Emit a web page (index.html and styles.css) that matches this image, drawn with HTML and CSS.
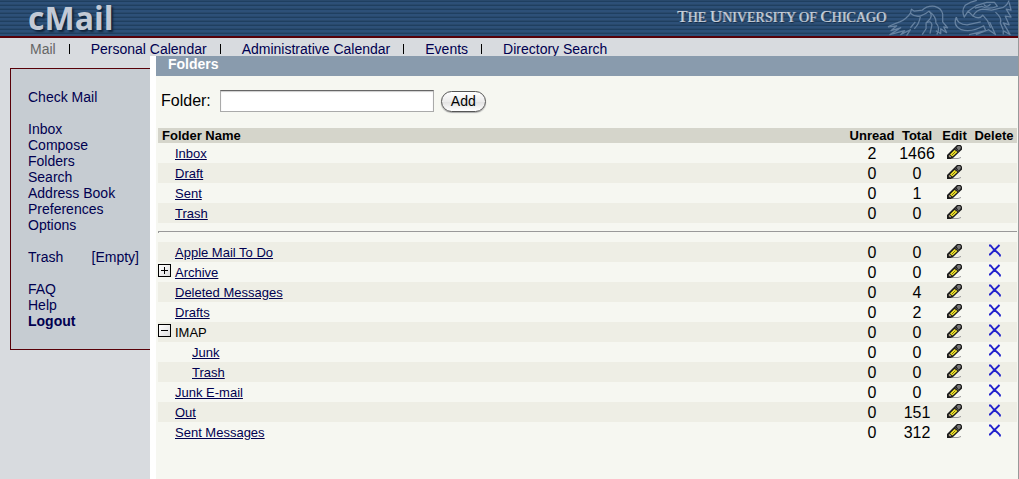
FILE: index.html
```html
<!DOCTYPE html>
<html lang="en">
<head>
<meta charset="utf-8">
<title>cMail - Folders</title>
<link rel="stylesheet" href="styles.css">
</head>
<body>
<svg class="defs" width="0" height="0" aria-hidden="true">
  <symbol id="pencil" viewBox="0 0 15 15">
    <path d="M5 13.500H11L14 12.500" fill="none" stroke="#999" stroke-width="1"/>
    <path d="M0 14V10L8 2L10 0H13.500L15 1.500V4.500L6 13L4 14Z" fill="#1c1c1c"/>
    <path d="M9.500 2.500L11 1H13L14 2.500L13 4.500L11.500 5.500Z" fill="#777"/>
    <path d="M8 3.500L12 6.500" stroke="#555" stroke-width="1"/>
    <path d="M3 9.500L7.500 5L10.500 7L5.500 11.500Z" fill="#f4e72a"/>
    <path d="M5 10L8.500 6.500" stroke="#7a7210" stroke-width="1"/>
    <path d="M1.500 11L2.500 10L4.500 12L3 12.500Z" fill="#b9a98c"/>
  </symbol>
  <symbol id="cross" viewBox="0 0 13 13">
    <path d="M1 1.500H2.500L5.500 5L10 9L12 11V12.500M11.500 1L6.500 6L2 10.500H1" fill="none" stroke="#2222cc" stroke-width="1.800"/>
  </symbol>
</svg>
<header class="banner">
  <div class="logo">cMail</div>
  <div class="school">
    <span class="school-name"><span class="cap">T</span>HE <span class="cap">U</span>NIVERSITY OF <span class="cap">C</span>HICAGO</span>
    <svg class="phoenix" viewBox="0 0 130 36" aria-hidden="true">
      <g fill="none" stroke="#6682a1" stroke-width="1.300" stroke-linejoin="round">
        <path d="M1 27Q7 24 13 22Q20 19 24 13L25 9L28 11L36 10Q41 5 49 6Q56 8 57 14V22L62 28L58 27L61 33L55 29V34L50 31"/>
        <path d="M1 27L10 26L4 31L14 28L3 35L18 31L14 35L24 30L20 36M24 13Q28 17 34 16Q40 14 43 11Q47 15 44 19L40 23V29L36 35"/>
        <path d="M43 11Q51 17 50 23Q55 28 51 35M40 23Q45 20 46 25L44 34M29 22L24 28M34 17Q33 24 28 29"/>
        <path d="M125 0Q122 7 116 8L107 10L98 9Q91 10 88 16L83 11L79 17Q76 10 80 5Q86 1 92 0"/>
        <path d="M83 11L92 5L102 2H110L113 6Q104 10 97 6L90 8M99 4Q102 8 106 4M88 16Q95 20 98 15L103 21L106 28"/>
        <path d="M71 17Q72 25 82 25L96 22M71 17Q67 26 76 30Q87 33 99 26L101 31L84 35M91 35L104 30L111 35L105 22"/>
        <path d="M125 2L127 10L122 9L127 17L121 16L125 25L119 23L126 35L119 31V35M111 12Q118 18 116 23L119 30"/>
      </g>
    </svg>
  </div>
</header>
<nav class="topnav" aria-label="Sections">
  <span class="current">Mail</span><i class="bar"></i>
  <a href="#">Personal Calendar</a><i class="bar"></i>
  <a href="#">Administrative Calendar</a><i class="bar"></i>
  <a href="#">Events</a><i class="bar"></i>
  <a href="#">Directory Search</a>
</nav>
<div class="layout">
  <aside class="side">
    <nav class="menu" aria-label="Mail">
      <div class="group"><a href="#">Check Mail</a></div>
      <div class="group">
        <a href="#">Inbox</a><a href="#">Compose</a><a href="#">Folders</a><a href="#">Search</a><a href="#">Address Book</a><a href="#">Preferences</a><a href="#">Options</a>
      </div>
      <div class="group trash"><a href="#">Trash</a><a href="#">[Empty]</a></div>
      <div class="group"><a href="#">FAQ</a><a href="#">Help</a><a class="logout" href="#">Logout</a></div>
    </nav>
  </aside>
  <main class="panel">
    <h1 class="title">Folders</h1>
    <form class="add">
      <label for="folder">Folder:</label>
      <input id="folder" type="text">
      <button type="button">Add</button>
    </form>
    <table class="folders">
      <colgroup><col><col class="c-unread"><col class="c-total"><col class="c-edit"><col class="c-delete"></colgroup>
      <thead>
        <tr><th class="name">Folder Name</th><th>Unread</th><th>Total</th><th>Edit</th><th>Delete</th></tr>
      </thead>
      <tbody>
        <tr><td class="name"><a href="#">Inbox</a></td><td>2</td><td>1466</td><td><a class="icon" href="#" aria-label="Edit Inbox"><svg class="pencil"><use href="#pencil"/></svg></a></td><td></td></tr>
        <tr class="shade"><td class="name"><a href="#">Draft</a></td><td>0</td><td>0</td><td><a class="icon" href="#" aria-label="Edit Draft"><svg class="pencil"><use href="#pencil"/></svg></a></td><td></td></tr>
        <tr><td class="name"><a href="#">Sent</a></td><td>0</td><td>1</td><td><a class="icon" href="#" aria-label="Edit Sent"><svg class="pencil"><use href="#pencil"/></svg></a></td><td></td></tr>
        <tr class="shade"><td class="name"><a href="#">Trash</a></td><td>0</td><td>0</td><td><a class="icon" href="#" aria-label="Edit Trash"><svg class="pencil"><use href="#pencil"/></svg></a></td><td></td></tr>
      </tbody>
      <tbody>
        <tr class="divider"><td colspan="5"><hr></td></tr>
      </tbody>
      <tbody>
        <tr class="shade"><td class="name"><a href="#">Apple Mail To Do</a></td><td>0</td><td>0</td><td><a class="icon" href="#" aria-label="Edit Apple Mail To Do"><svg class="pencil"><use href="#pencil"/></svg></a></td><td><a class="icon" href="#" aria-label="Delete Apple Mail To Do"><svg class="cross"><use href="#cross"/></svg></a></td></tr>
        <tr><td class="name tree"><div class="node"><button class="toggle plus" type="button" aria-label="Expand Archive"></button><a href="#">Archive</a></div></td><td>0</td><td>0</td><td><a class="icon" href="#" aria-label="Edit Archive"><svg class="pencil"><use href="#pencil"/></svg></a></td><td><a class="icon" href="#" aria-label="Delete Archive"><svg class="cross"><use href="#cross"/></svg></a></td></tr>
        <tr class="shade"><td class="name"><a href="#">Deleted Messages</a></td><td>0</td><td>4</td><td><a class="icon" href="#" aria-label="Edit Deleted Messages"><svg class="pencil"><use href="#pencil"/></svg></a></td><td><a class="icon" href="#" aria-label="Delete Deleted Messages"><svg class="cross"><use href="#cross"/></svg></a></td></tr>
        <tr><td class="name"><a href="#">Drafts</a></td><td>0</td><td>2</td><td><a class="icon" href="#" aria-label="Edit Drafts"><svg class="pencil"><use href="#pencil"/></svg></a></td><td><a class="icon" href="#" aria-label="Delete Drafts"><svg class="cross"><use href="#cross"/></svg></a></td></tr>
        <tr class="shade"><td class="name tree"><div class="node"><button class="toggle" type="button" aria-label="Collapse IMAP"></button><span>IMAP</span></div></td><td>0</td><td>0</td><td><a class="icon" href="#" aria-label="Edit IMAP"><svg class="pencil"><use href="#pencil"/></svg></a></td><td><a class="icon" href="#" aria-label="Delete IMAP"><svg class="cross"><use href="#cross"/></svg></a></td></tr>
        <tr><td class="name child"><a href="#">Junk</a></td><td>0</td><td>0</td><td><a class="icon" href="#" aria-label="Edit Junk"><svg class="pencil"><use href="#pencil"/></svg></a></td><td><a class="icon" href="#" aria-label="Delete Junk"><svg class="cross"><use href="#cross"/></svg></a></td></tr>
        <tr class="shade"><td class="name child"><a href="#">Trash</a></td><td>0</td><td>0</td><td><a class="icon" href="#" aria-label="Edit IMAP Trash"><svg class="pencil"><use href="#pencil"/></svg></a></td><td><a class="icon" href="#" aria-label="Delete IMAP Trash"><svg class="cross"><use href="#cross"/></svg></a></td></tr>
        <tr><td class="name"><a href="#">Junk E-mail</a></td><td>0</td><td>0</td><td><a class="icon" href="#" aria-label="Edit Junk E-mail"><svg class="pencil"><use href="#pencil"/></svg></a></td><td><a class="icon" href="#" aria-label="Delete Junk E-mail"><svg class="cross"><use href="#cross"/></svg></a></td></tr>
        <tr class="shade"><td class="name"><a href="#">Out</a></td><td>0</td><td>151</td><td><a class="icon" href="#" aria-label="Edit Out"><svg class="pencil"><use href="#pencil"/></svg></a></td><td><a class="icon" href="#" aria-label="Delete Out"><svg class="cross"><use href="#cross"/></svg></a></td></tr>
        <tr><td class="name"><a href="#">Sent Messages</a></td><td>0</td><td>312</td><td><a class="icon" href="#" aria-label="Edit Sent Messages"><svg class="pencil"><use href="#pencil"/></svg></a></td><td><a class="icon" href="#" aria-label="Delete Sent Messages"><svg class="cross"><use href="#cross"/></svg></a></td></tr>
      </tbody>
    </table>
  </main>
</div>
</body>
</html>
```
FILE: styles.css
```css
* { box-sizing: border-box; }
body {
  margin: 0;
  min-height: 100vh;
  display: flex;
  flex-direction: column;
  border-right: 1px solid #999;
  background: #d8dbdf;
  color: #000;
  font: 14px/16px "Liberation Sans", Arial, sans-serif;
}
a { color: #000050; text-decoration: none; }
.defs { position: absolute; }

.banner {
  display: flex;
  justify-content: space-between;
  height: 38px;
  padding: 0 4px 0 28px;
  border-bottom: 2px solid #580008;
  background: repeating-linear-gradient(#29496c 0 1px, #1f3f60 1px 2px, #2d5078 2px 4px);
}
.logo {
  color: #c3cad6;
  font: bold 32px/36px "Open Sans", sans-serif;
  text-shadow: 2px 2px 2px #10243c;
}
.school { display: flex; gap: 1px; }
.school-name {
  color: #c9d0da;
  font: 14px/34px "Liberation Serif", serif;
  text-shadow: 1px 0 0 #8494a8, 1px 1px 1px #10243c;
}
.cap { font-size: 17px; }
.phoenix { width: 127px; height: 36px; }

.topnav {
  display: flex;
  align-items: center;
  height: 18px;
  padding: 4px 0 0 30px;
  white-space: nowrap;
}
.current { color: #666; }
.bar { width: 1px; height: 10px; margin: 0 21px 0 13px; background: #000; }

.layout { display: flex; flex: 1; }
.side { width: 150px; flex: none; padding: 12px 0 0 10px; }
.menu {
  display: flex;
  flex-direction: column;
  gap: 16px;
  padding: 20px 0 20px 17px;
  border: 1px solid #580008;
  border-right: 0;
  background: #c6ccd2;
}
.group { display: flex; flex-direction: column; }
.trash { flex-direction: row; justify-content: space-between; padding-right: 11px; }
.logout { font-weight: bold; }

.panel {
  flex: 1;
  min-width: 0;
  border-left: 6px solid #fff;
  background: #f6f7f1;
}
.title {
  height: 20px;
  margin: 0;
  padding-left: 12px;
  background: #899bad;
  color: #fff;
  font-size: 14px;
  line-height: 16px;
}
.add {
  display: flex;
  align-items: center;
  height: 52px;
  padding: 0 0 2px 5px;
  font-size: 16px;
}
.add input {
  width: 214px;
  height: 22px;
  margin: 0 7px 0 9px;
  border: 1px solid #aaa;
  border-top-color: #666;
  background: #fff;
  box-shadow: inset 0 1px 1px #ccc;
  font: inherit;
}
.add button {
  width: 45px;
  height: 21px;
  padding: 0;
  border: 1px solid #555;
  border-radius: 11px;
  background: linear-gradient(#fff, #ececec 50%, #e0e0e0 50%, #fff);
  box-shadow: 0 1px 1px #aaa;
  font: 14px/16px "Liberation Sans", Arial, sans-serif;
}

.folders {
  width: calc(100% - 3px);
  margin-left: 2px;
  table-layout: fixed;
  border-collapse: collapse;
}
.c-unread { width: 48px; }
.c-total { width: 42px; }
.c-edit { width: 33px; }
.c-delete { width: 46px; }
th {
  height: 15px;
  padding: 0;
  background: #d5d5cb;
  font-size: 13px;
  line-height: 15px;
}
td {
  height: 20px;
  padding: 2px 0 0;
  font-size: 16px;
  line-height: 18px;
  text-align: center;
}
.name { text-align: left; }
th.name { padding-left: 4px; }
td.name { padding-left: 17px; font-size: 13px; }
td.name a { text-decoration: underline; }
td.name.tree { padding-left: 0; }
td.name.child { padding-left: 34px; }
.shade { background: #eeeee5; }
.node { display: flex; gap: 4px; }
.toggle {
  width: 13px;
  height: 13px;
  padding: 0;
  border: 1px solid #000;
  background:
    linear-gradient(#000, #000) center / 7px 1px no-repeat,
    linear-gradient(135deg, #fff, #ddd);
}
.plus {
  background:
    linear-gradient(#000, #000) center / 7px 1px no-repeat,
    linear-gradient(#000, #000) center / 1px 7px no-repeat,
    linear-gradient(135deg, #fff, #ddd);
}
.icon { display: flex; justify-content: center; height: 18px; }
.pencil { width: 15px; height: 15px; }
.cross { width: 13px; height: 13px; }
.divider td { height: 19px; padding: 0; }
hr { height: 2px; margin: 0 0 2px; border: 1px solid #999; border-width: 1px 0 0 1px; }
```
